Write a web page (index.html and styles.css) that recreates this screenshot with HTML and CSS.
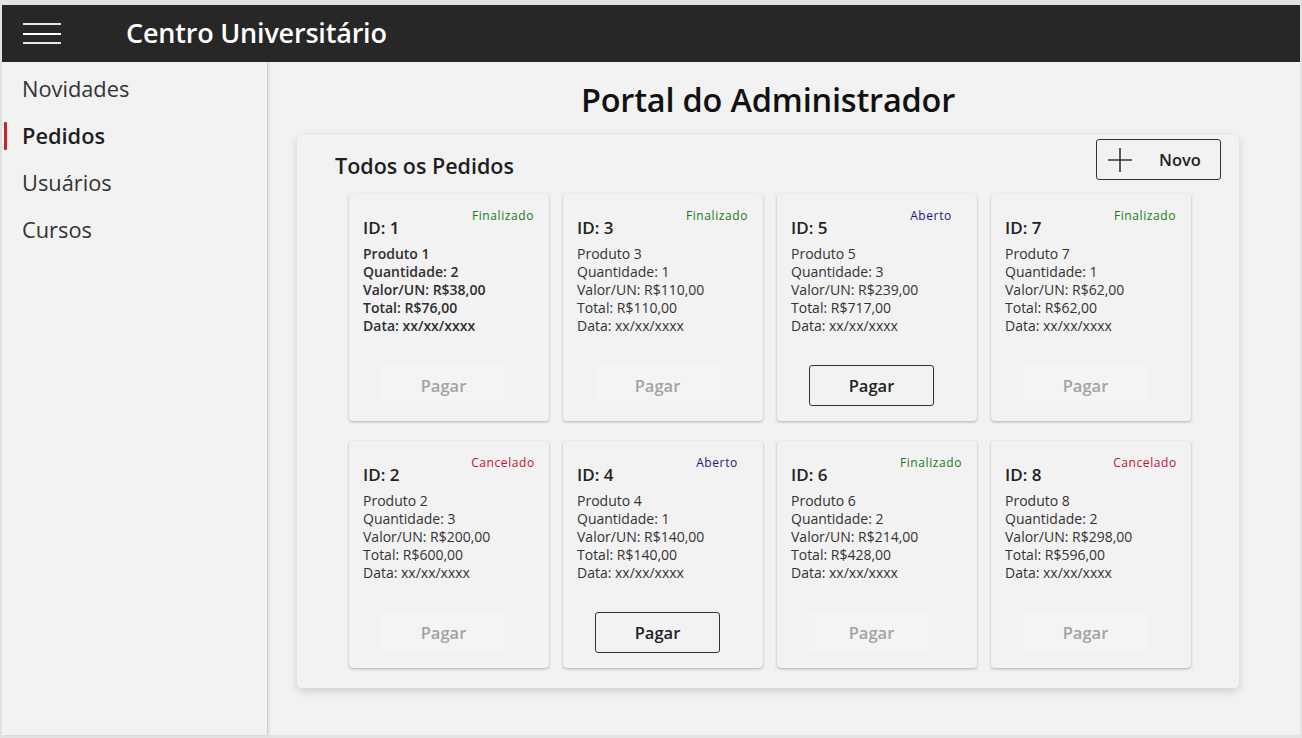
FILE: index.html
```html
<!DOCTYPE html>
<html lang="pt-BR">
<head>
<meta charset="utf-8">
<title>Portal do Administrador</title>
<link rel="stylesheet" href="styles.css">
</head>
<body>
<div class="frame">
  <header class="topbar">
    <button class="menu-btn" aria-label="Menu">
      <svg width="38" height="22" viewBox="0 0 38 22"><rect x="0" y="0" width="38" height="2" fill="#e6e6e6"/><rect x="0" y="10" width="38" height="2" fill="#ffffff"/><rect x="0" y="19" width="38" height="2" fill="#e6e6e6"/></svg>
    </button>
    <h1 class="brand">Centro Universitário</h1>
  </header>
  <div class="body-row">
    <nav class="sidebar">
      <a class="nav-item">Novidades</a>
      <a class="nav-item active">Pedidos</a>
      <a class="nav-item">Usuários</a>
      <a class="nav-item">Cursos</a>
    </nav>
    <main class="main">
      <div class="content">
        <h2 class="page-title">Portal do Administrador</h2>
        <section class="panel">
          <div class="panel-head">
            <h3 class="panel-title">Todos os Pedidos</h3>
            <button class="new-btn">
              <svg width="26" height="26" viewBox="0 0 26 26"><path d="M13 1v24M1 13h24" stroke="#333" stroke-width="1.6" fill="none"/></svg>
              <span>Novo</span>
            </button>
          </div>
          <div class="grid">
            <article class="card strong">
              <div class="card-head"><span class="card-id">ID: 1</span><span class="status ok">Finalizado</span></div>
              <div class="lines"><div>Produto 1</div><div>Quantidade: 2</div><div>Valor/UN: R$38,00</div><div>Total: R$76,00</div><div>Data: xx/xx/xxxx</div></div>
              <button class="pay disabled">Pagar</button>
            </article>
            <article class="card">
              <div class="card-head"><span class="card-id">ID: 3</span><span class="status ok">Finalizado</span></div>
              <div class="lines"><div>Produto 3</div><div>Quantidade: 1</div><div>Valor/UN: R$110,00</div><div>Total: R$110,00</div><div>Data: xx/xx/xxxx</div></div>
              <button class="pay disabled">Pagar</button>
            </article>
            <article class="card">
              <div class="card-head"><span class="card-id">ID: 5</span><span class="status open">Aberto</span></div>
              <div class="lines"><div>Produto 5</div><div>Quantidade: 3</div><div>Valor/UN: R$239,00</div><div>Total: R$717,00</div><div>Data: xx/xx/xxxx</div></div>
              <button class="pay">Pagar</button>
            </article>
            <article class="card">
              <div class="card-head"><span class="card-id">ID: 7</span><span class="status ok">Finalizado</span></div>
              <div class="lines"><div>Produto 7</div><div>Quantidade: 1</div><div>Valor/UN: R$62,00</div><div>Total: R$62,00</div><div>Data: xx/xx/xxxx</div></div>
              <button class="pay disabled">Pagar</button>
            </article>
            <article class="card">
              <div class="card-head"><span class="card-id">ID: 2</span><span class="status cancel">Cancelado</span></div>
              <div class="lines"><div>Produto 2</div><div>Quantidade: 3</div><div>Valor/UN: R$200,00</div><div>Total: R$600,00</div><div>Data: xx/xx/xxxx</div></div>
              <button class="pay disabled">Pagar</button>
            </article>
            <article class="card">
              <div class="card-head"><span class="card-id">ID: 4</span><span class="status open">Aberto</span></div>
              <div class="lines"><div>Produto 4</div><div>Quantidade: 1</div><div>Valor/UN: R$140,00</div><div>Total: R$140,00</div><div>Data: xx/xx/xxxx</div></div>
              <button class="pay">Pagar</button>
            </article>
            <article class="card">
              <div class="card-head"><span class="card-id">ID: 6</span><span class="status ok">Finalizado</span></div>
              <div class="lines"><div>Produto 6</div><div>Quantidade: 2</div><div>Valor/UN: R$214,00</div><div>Total: R$428,00</div><div>Data: xx/xx/xxxx</div></div>
              <button class="pay disabled">Pagar</button>
            </article>
            <article class="card">
              <div class="card-head"><span class="card-id">ID: 8</span><span class="status cancel">Cancelado</span></div>
              <div class="lines"><div>Produto 8</div><div>Quantidade: 2</div><div>Valor/UN: R$298,00</div><div>Total: R$596,00</div><div>Data: xx/xx/xxxx</div></div>
              <button class="pay disabled">Pagar</button>
            </article>
          </div>
        </section>
      </div>
    </main>
  </div>
</div>
</body>
</html>
```
FILE: styles.css
```css
* { box-sizing: border-box; }
html, body { margin: 0; padding: 0; }
body {
  background: #e3e3e3;
  font-family: "Open Sans", "Noto Sans", sans-serif;
  color: #222;
}
.frame {
  width: 1302px;
  height: 738px;
  padding: 5px 2px 3px 2px;
  display: flex;
  flex-direction: column;
}
.topbar {
  height: 57px;
  background: #272727;
  display: flex;
  align-items: center;
  flex-shrink: 0;
}
.menu-btn {
  background: none;
  border: 0;
  padding: 0;
  margin-left: 21px;
  width: 38px;
  height: 22px;
  display: flex;
}
.brand {
  margin: 0 0 0 65px;
  color: #fff;
  font-size: 27px;
  font-weight: 600;
  letter-spacing: -0.2px;
  line-height: 1;
  padding-bottom: 2px;
}
.body-row {
  flex: 1;
  display: flex;
  background: #f2f2f2;
}
.sidebar {
  width: 266px;
  flex-shrink: 0;
  background: #f2f2f2;
  border-right: 1px solid #cfcfcf;
  box-shadow: 1px 0 3px rgba(0,0,0,0.12);
  padding-top: 3px;
  display: flex;
  flex-direction: column;
}
.nav-item {
  height: 47px;
  display: flex;
  align-items: center;
  font-size: 21.8px;
  color: #333;
  padding-left: 2px;
}
.nav-item::before {
  content: "";
  width: 3px;
  height: 28px;
  margin-right: 15px;
  background: transparent;
  border-radius: 1px;
}
.nav-item.active { font-weight: 600; color: #1e1e1e; }
.nav-item.active::before { background: #c4262e; }
.main {
  flex: 1;
  padding: 18px 0 0 29px;
}
.content {
  width: 942px;
  display: flex;
  flex-direction: column;
}
.page-title {
  margin: 0;
  height: 40px;
  line-height: 40px;
  text-align: center;
  font-size: 32.5px;
  font-weight: 600;
  color: #111;
  letter-spacing: -0.2px;
}
.panel {
  margin-top: 15px;
  background: #f2f2f2;
  border-radius: 5px;
  box-shadow: 0 3px 10px rgba(0,0,0,0.16);
  padding: 4px 18px 20px 38px;
}
.panel-head {
  height: 55px;
  display: flex;
  justify-content: space-between;
  align-items: flex-start;
}
.panel-title {
  margin: 12px 0 0 0;
  line-height: 30px;
  font-size: 21.5px;
  font-weight: 600;
  color: #1e1e1e;
}
.new-btn {
  width: 125px;
  height: 41px;
  border: 1px solid #333;
  border-radius: 3px;
  background: transparent;
  display: flex;
  align-items: center;
  padding: 0 0 0 10px;
  font-family: inherit;
  font-size: 16.5px;
  font-weight: 600;
  color: #222;
}
.new-btn span { margin-left: 26px; }
.grid {
  margin-left: 14px;
  display: grid;
  grid-template-columns: repeat(4, 200px);
  column-gap: 14px;
  row-gap: 20px;
}
.card {
  height: 227px;
  background: #f2f2f2;
  border-radius: 4px;
  box-shadow: 0 1px 3px rgba(0,0,0,0.28);
  padding: 14px 14px 15px 14px;
  display: flex;
  flex-direction: column;
}
.card-head {
  display: flex;
  justify-content: space-between;
  align-items: flex-start;
  height: 31px;
}
.card-id {
  margin-top: 9px;
  line-height: 22px;
  font-size: 17px;
  font-weight: 600;
  color: #222;
}
.status {
  width: 80px;
  margin-right: -8px;
  text-align: center;
  font-size: 12px;
  line-height: 16px;
  letter-spacing: 0.6px;
}
.status.ok { color: #1a7a1a; }
.status.open { color: #1d1381; }
.status.cancel { color: #c50f2f; }
.lines {
  margin-top: 6px;
  font-size: 14px;
  line-height: 18px;
  color: #333;
  letter-spacing: 0;
}
.card.strong .lines { font-weight: 600; color: #2e2e2e; }
.pay {
  margin: 30px 0 0 18px;
  width: 125px;
  height: 41px;
  border: 1px solid #333;
  border-radius: 3px;
  background: transparent;
  font-family: inherit;
  font-size: 16.5px;
  font-weight: 600;
  color: #222;
}
.pay.disabled {
  border-color: transparent;
  background: #f4f4f4;
  color: #a3a3a3;
}
```
